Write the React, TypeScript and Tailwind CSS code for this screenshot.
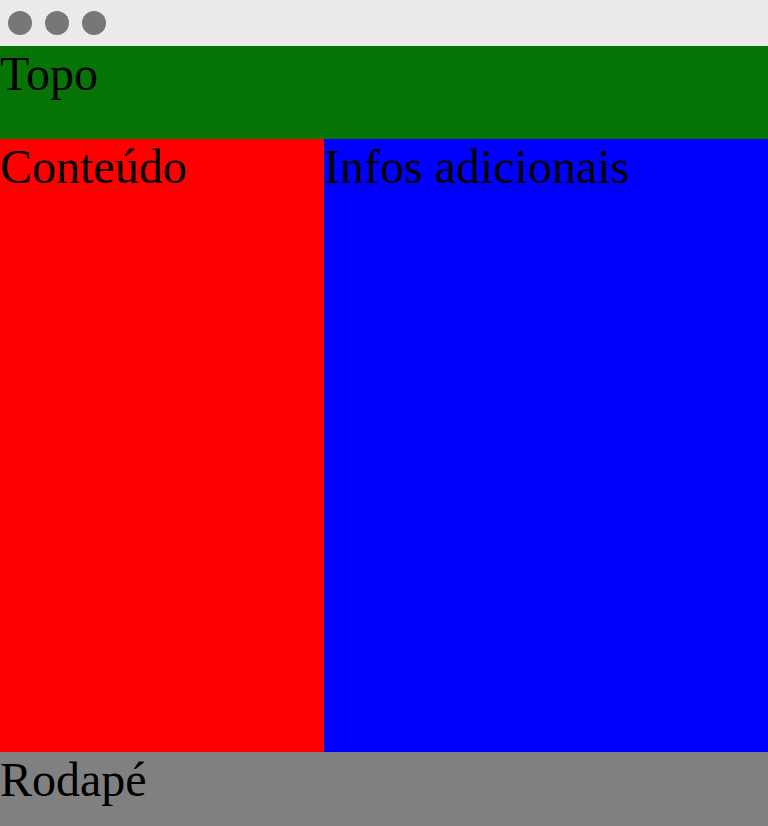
export default function App() {
  return (
    <div className="flex h-[826px] w-[768px] flex-col overflow-hidden bg-[#ebe9eb] font-['Liberation_Serif','Times_New_Roman',serif] text-[48px] leading-[normal] text-black">
      {/* window chrome */}
      <div className="flex h-[46px] shrink-0 items-center gap-[13px] pl-[8px]">
        <span className="h-[24px] w-[24px] rounded-full bg-[#777777]" />
        <span className="h-[24px] w-[24px] rounded-full bg-[#777777]" />
        <span className="h-[24px] w-[24px] rounded-full bg-[#777777]" />
      </div>

      <header className="h-[93px] shrink-0 bg-[#067506]">Topo</header>

      <main className="flex h-[613px] shrink-0">
        <section className="w-[324px] shrink-0 bg-[#ff0000]">Conteúdo</section>
        <aside className="flex-1 bg-[#0000ff]">Infos adicionais</aside>
      </main>

      <footer className="flex-1 bg-[#808080]">Rodapé</footer>
    </div>
  );
}
